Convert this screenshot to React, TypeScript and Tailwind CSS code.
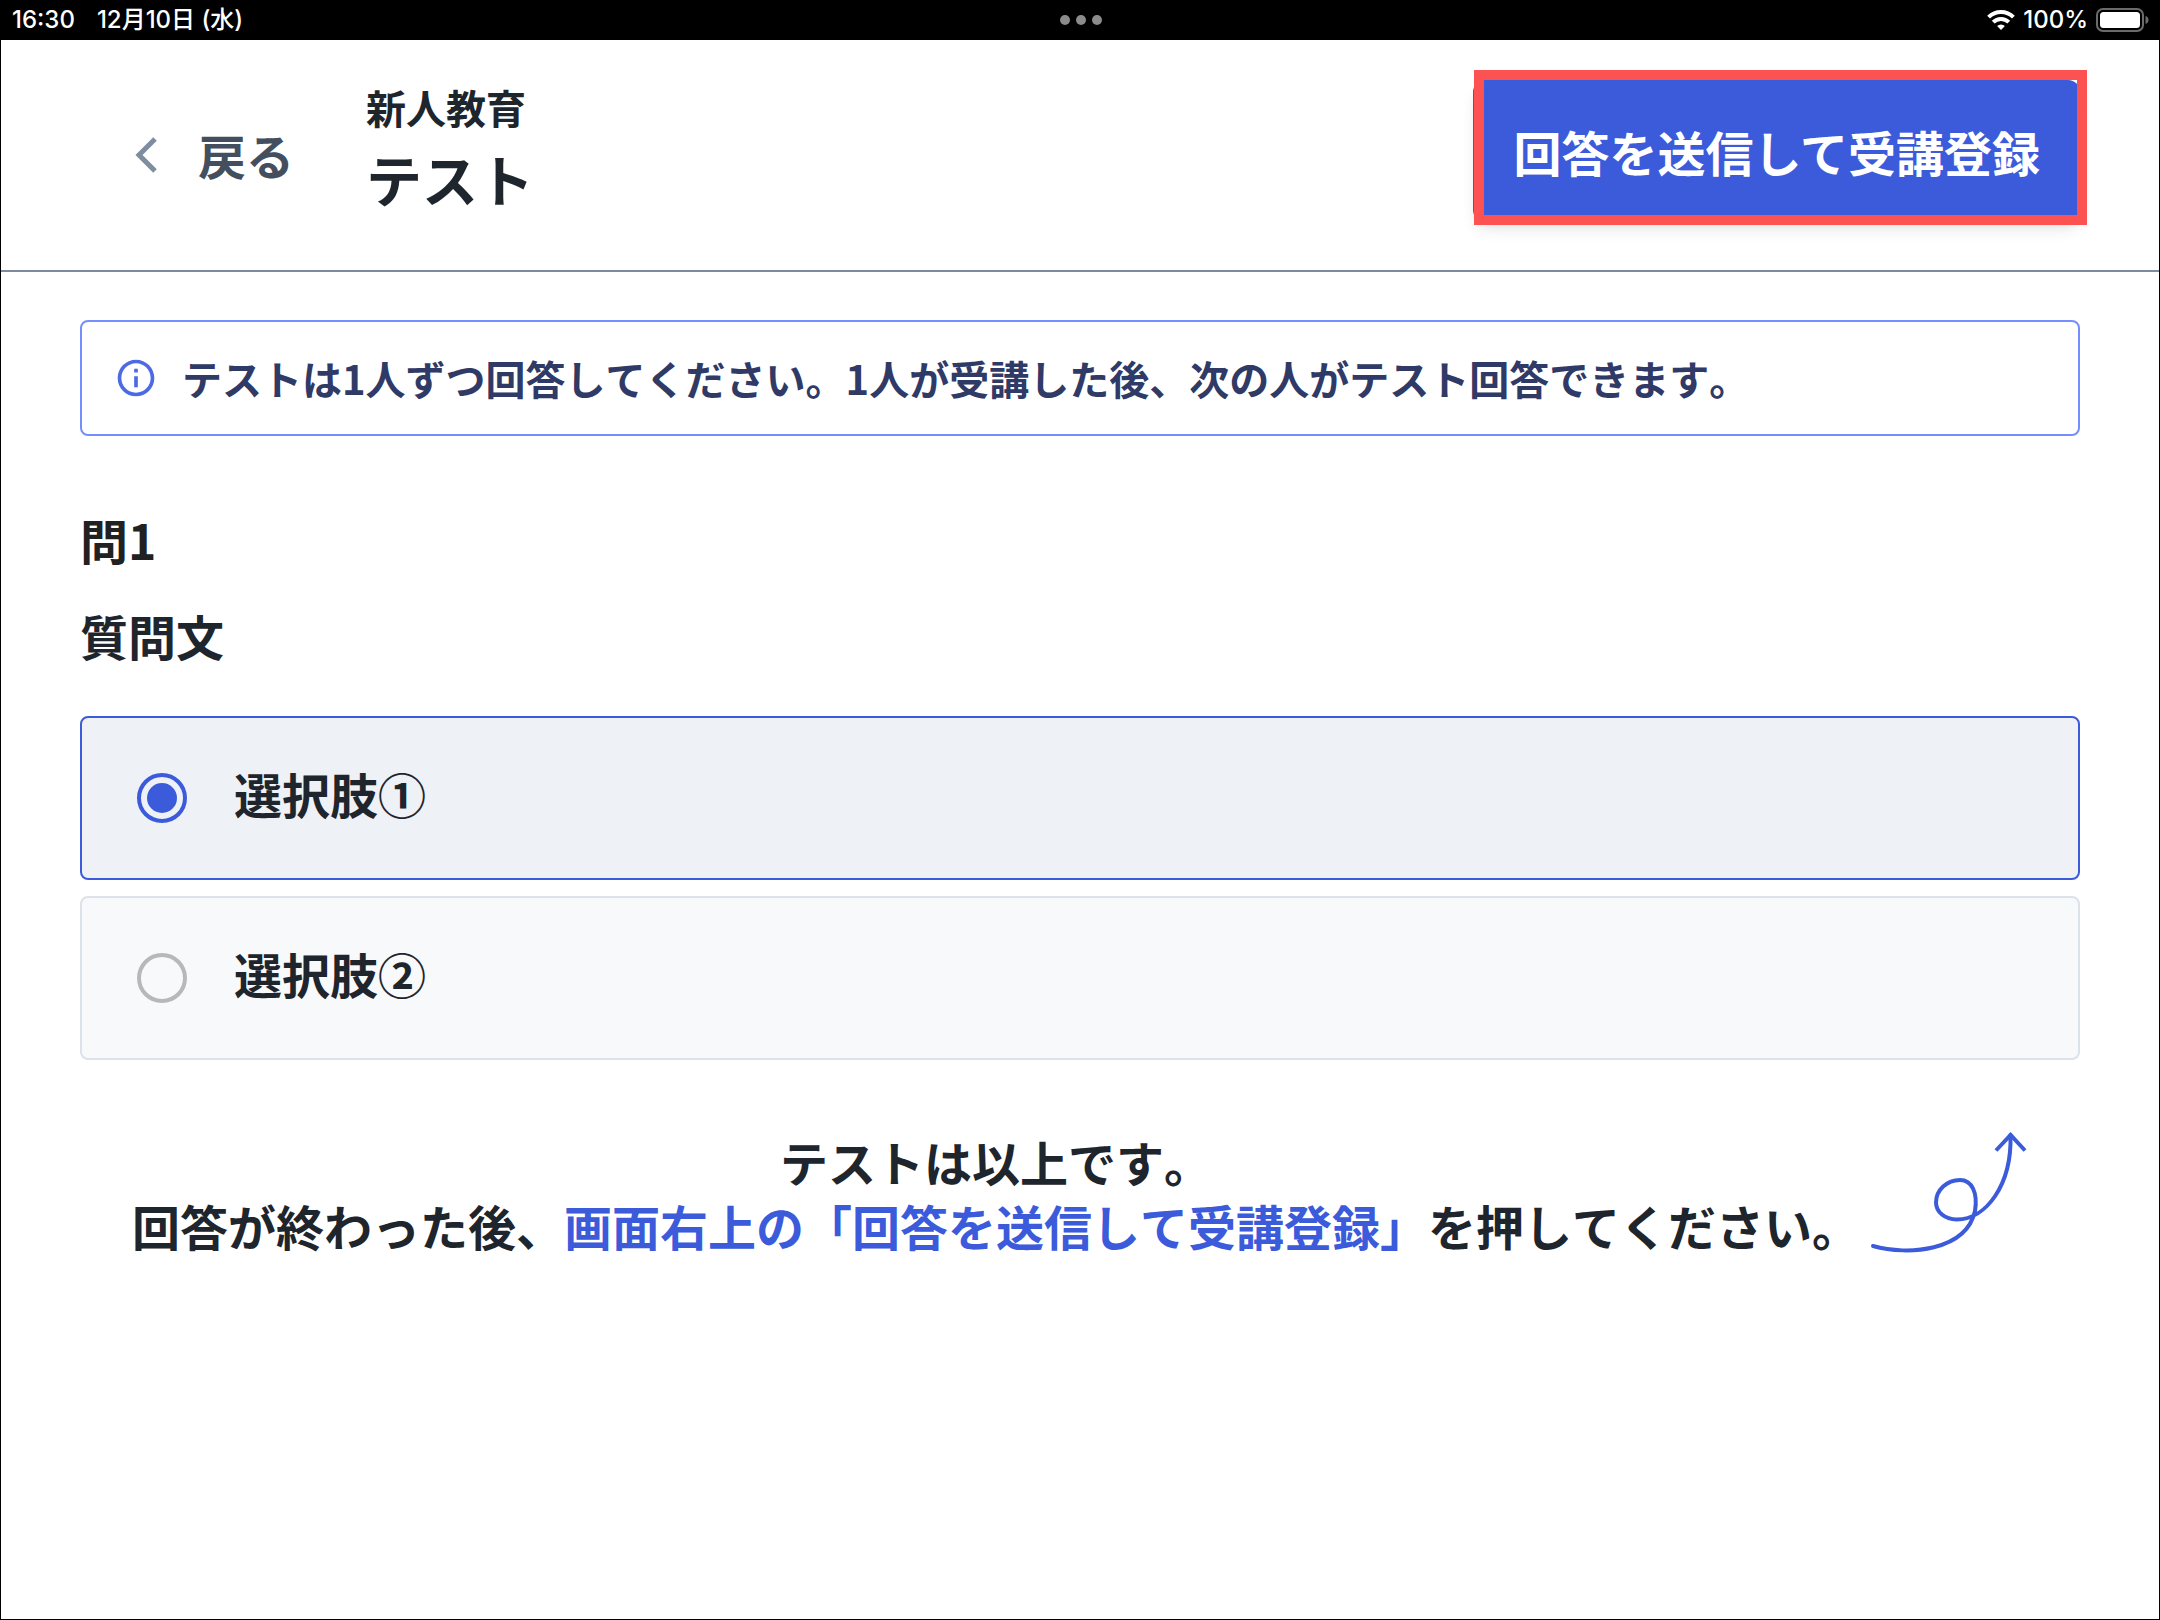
import { useState } from "react";
import { clsx } from "clsx";

const OPTIONS = [
  { id: "choice-1", label: "選択肢①" },
  { id: "choice-2", label: "選択肢②" },
];

function StatusBar() {
  return (
    <div className="grid h-10 grid-cols-3 items-center bg-black pl-3 pr-2.5 font-['Inter','Noto_Sans_CJK_JP',sans-serif] text-2xl font-medium leading-10 text-white">
      <div className="flex gap-[22px]">
        <span>16:30</span>
        <span>12月10日 (水)</span>
      </div>
      <div className="flex justify-center gap-1.5">
        <span className="size-2.5 rounded-full bg-[#8b8b8b]" />
        <span className="size-2.5 rounded-full bg-[#8b8b8b]" />
        <span className="size-2.5 rounded-full bg-[#8b8b8b]" />
      </div>
      <div className="flex items-center justify-end gap-2">
        <WifiIcon />
        <span>100%</span>
        <BatteryIcon />
      </div>
    </div>
  );
}

function WifiIcon() {
  return (
    <svg width="28" height="20" viewBox="0 0 28 20" fill="none" stroke="#fff" strokeWidth="4" aria-hidden="true">
      <path d="M1.600 7.200a17.400 17.400 0 0 1 24.800 0" />
      <path d="M6.200 12.200a11 11 0 0 1 15.600 0" />
      <path d="M14 20l-3.900-4a5.600 5.600 0 0 1 7.800 0z" fill="#fff" stroke="none" />
    </svg>
  );
}

function BatteryIcon() {
  return (
    <svg width="54" height="24" viewBox="0 0 54 24" fill="none" aria-hidden="true">
      <rect x="1" y="1" width="46" height="22" rx="6" stroke="#6b6b6b" strokeWidth="2" />
      <rect x="4" y="4" width="40" height="16" rx="3.5" fill="#fff" />
      <path d="M49.500 8c2 .6 3 2.200 3 4s-1 3.400-3 4z" fill="#6b6b6b" />
    </svg>
  );
}

function InfoIcon() {
  return (
    <svg className="size-11 shrink-0" viewBox="0 0 24 24" fill="#4c6ae4" aria-hidden="true">
      <path d="M11 7h2v2h-2zm0 4h2v6h-2zm1-9C6.480 2 2 6.480 2 12s4.480 10 10 10 10-4.480 10-10S17.520 2 12 2zm0 18c-4.410 0-8-3.590-8-8s3.590-8 8-8 8 3.590 8 8-3.590 8-8 8z" />
    </svg>
  );
}

function LoopArrow() {
  return (
    <svg className="shrink-0" width="160" height="130" viewBox="0 0 160 130" fill="none" stroke="#3b5bdb" strokeWidth="4" aria-hidden="true">
      <path
        strokeLinecap="round"
        d="M5 119C40 129 98 124 107 84C110 66 104 53 92 53C79 53 68 63 68 75.500C68 85 77 92.500 88.700 92.500C118 92.500 144 58 142.500 8"
      />
      <path d="M128 23.500L142.600 8L157 23.500" />
    </svg>
  );
}

function Header() {
  return (
    <header className="flex items-start justify-between border-b-2 border-[#7d8aa0] px-[79px] py-10">
      <div className="flex items-start">
        <button type="button" className="flex items-center gap-10 py-[39px] pl-[54px] text-5xl font-bold text-[#434f5f]">
          <svg width="24" height="36" viewBox="0 0 24 36" fill="none" stroke="#7f8da1" strokeWidth="5" aria-hidden="true">
            <path d="M21 2L5 18l16 16" />
          </svg>
          <span className="pb-0.5 leading-[70px]">戻る</span>
        </button>
        <div className="pl-[72px]">
          <p className="text-[40px] font-bold leading-[54px]">新人教育</p>
          <h1 className="text-[56px] font-bold leading-[88px]">テスト</h1>
        </div>
      </div>
      <button
        type="button"
        className="relative rounded-xl bg-[#3b5bdb] px-10 py-9 text-5xl font-bold leading-[70px] text-white shadow-lg"
      >
        回答を送信して受講登録
        <span className="absolute -bottom-[3px] -right-[7px] -top-[10px] left-px border-[10px] border-[#fc5252]" />
      </button>
    </header>
  );
}

export default function App() {
  const [selected, setSelected] = useState("choice-1");

  return (
    <div className="flex min-h-screen flex-col bg-black font-['Noto_Sans_CJK_JP',sans-serif] text-[#1e252c]" lang="ja">
      <StatusBar />
      <div className="mx-px mb-px grow bg-white">
        <Header />
        <main className="px-[79px] pt-12 [font-kerning:none]">
          <div className="flex items-center gap-6 rounded-lg border-2 border-[#748ffc] px-8 py-[26px]">
            <InfoIcon />
            <p className="text-[40px] font-bold leading-[60px] text-[#2f3a66]">
              テストは1人ずつ回答してください。1人が受講した後、次の人がテスト回答できます。
            </p>
          </div>

          <h2 className="mt-[67px] text-5xl font-bold leading-[72px] text-[#212121]">問1</h2>
          <fieldset>
            <legend className="mb-[45px] pt-6 text-5xl font-bold leading-[72px]">質問文</legend>
            <div className="space-y-4">
              {OPTIONS.map((o) => (
                <label
                  key={o.id}
                  className={clsx(
                    "flex h-[164px] items-center gap-[47px] rounded-lg border-2 pl-[55px]",
                    selected === o.id ? "border-[#3b5bdb] bg-[#eef1f6]" : "border-[#dbe2ea] bg-[#f8f9fb]",
                  )}
                >
                  <input
                    type="radio"
                    name="answer"
                    value={o.id}
                    checked={selected === o.id}
                    onChange={() => setSelected(o.id)}
                    className="size-[50px] appearance-none rounded-full border-4 border-[#b8b8b8] bg-clip-content p-1.5 checked:border-[#3b5bdb] checked:bg-[#3b5bdb]"
                  />
                  <span className="pb-2.5 text-5xl font-bold leading-[72px]">{o.label}</span>
                </label>
              ))}
            </div>
          </fieldset>

          <div className="mt-[67px] flex items-center justify-center gap-2">
            <p className="pt-0.5 text-center text-5xl font-bold leading-[64px]">
              テストは以上です。
              <br />
              回答が終わった後、
              <span className="text-[#3b5bdb]">画面右上の「回答を送信して受講登録」</span>
              を押してください。
            </p>
            <LoopArrow />
          </div>
        </main>
      </div>
    </div>
  );
}
